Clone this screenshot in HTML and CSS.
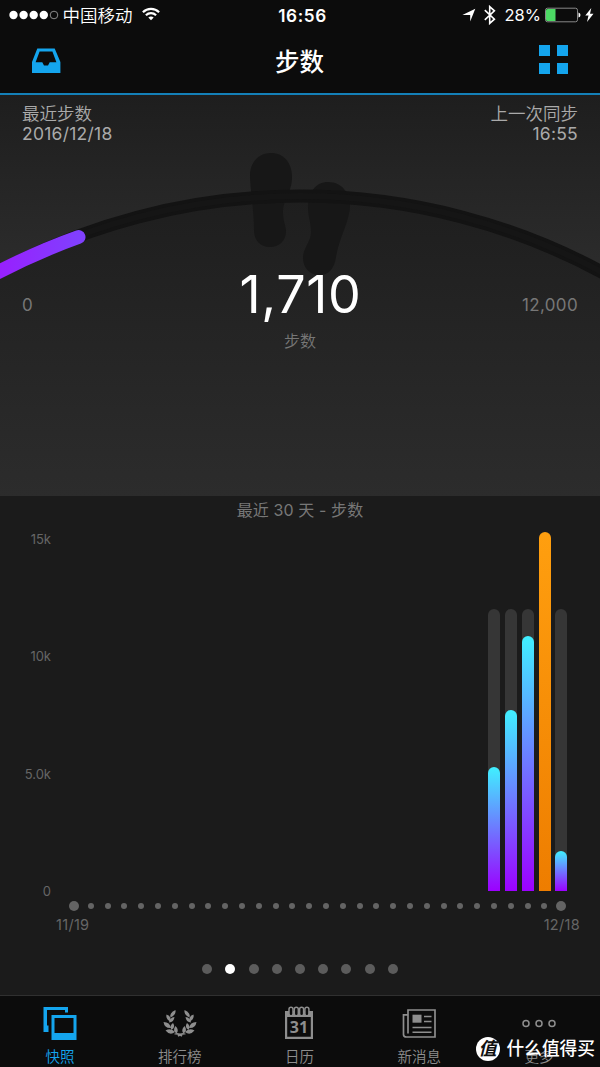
FILE: index.html
```html
<!DOCTYPE html>
<html lang="zh-CN">
  <head>
    <meta charset="UTF-8" />
    <meta name="viewport" content="width=device-width, initial-scale=1.0" />
    <title>步数</title>
    <link rel="stylesheet" href="styles.css">
  </head>
  <body>
    <div class="status">
      <div class="status-left">
        <svg width="50" height="10" viewBox="0 0 50 10">
          <g fill="#fff">
            <circle cx="4.5" cy="5" r="4.2" />
            <circle cx="14.6" cy="5" r="4.2" />
            <circle cx="24.7" cy="5" r="4.2" />
            <circle cx="34.8" cy="5" r="4.2" />
          </g>
          <circle cx="45" cy="5" r="3.8" fill="none" stroke="#aaa" stroke-width=".8" />
        </svg>
        <span class="carrier">中国移动</span>
        <svg class="wifi" width="18" height="14" viewBox="0 0 18 14">
          <g fill="none" stroke="#fff" stroke-width="2.2">
            <path d="M.9 5.2C5.4.7 12.6.7 17.1 5.2" />
            <path d="M3.9 8.3C6.8 5.5 11.2 5.5 14.1 8.3" />
          </g>
          <path d="M6.3 10.5Q9 8.5 11.7 10.5L9 13.3Z" fill="#fff" />
        </svg>
      </div>
      <div class="clock">16:56</div>
      <div class="status-right">
        <svg width="14" height="14" viewBox="0 0 14 14"><path d="M13.3.8L8.2 13.5V6.9H.4Z" fill="#fff" /></svg>
        <svg class="bluetooth" width="12" height="20" viewBox="0 0 12 20"><path d="M.8 5.2L10.4 14.2L5.7 18.4V1.6L10.4 5.8L.8 14.8" fill="none" stroke="#fff" stroke-width="1.6" /></svg>
        <span class="percent">28%</span>
        <svg width="36" height="16" viewBox="0 0 36 16">
          <rect x=".5" y="1.2" width="32" height="13.6" rx="2" fill="none" stroke="#888" />
          <path d="M2.5 2H10.5V14H2.5A1.5 1.5 0 0 1 1 12.5V3.5A1.5 1.5 0 0 1 2.5 2Z" fill="#4cd964" />
          <path d="M33.5 5.5Q35.5 6 35.5 8T33.5 10.5Z" fill="#fff" />
        </svg>
        <svg class="bolt" width="9" height="14" viewBox="0 0 9 14"><path d="M6.3 0L.3 7.6H3.5L2 14L8.5 5.7H5Z" fill="#fff" /></svg>
      </div>
    </div>

    <div class="nav">
      <svg width="30" height="26" viewBox="0 0 30 26">
        <path fill="#14a5ee" fill-rule="evenodd" d="M6.3 1.5H23.7L29.4 15V26H1V15ZM8.6 4.5L4.6 15.3H11.3L13 18.5H17L18.7 15.3H25.4L21.4 4.5Z" />
      </svg>
      <h1>步数</h1>
      <div class="grid-icon"><i></i><i></i><i></i><i></i></div>
    </div>

    <div class="gauge">
      <svg class="arc" width="600" height="401" viewBox="0 1 600 401">
        <defs>
          <linearGradient id="purple" x1="0" y1="0" x2="80" y2="0" gradientUnits="userSpaceOnUse">
            <stop offset="0" stop-color="#9820fe" />
            <stop offset="1" stop-color="#8040fe" />
          </linearGradient>
          <linearGradient id="inner" x1="0" y1="102" x2="0" y2="402" gradientUnits="userSpaceOnUse">
            <stop offset="0" stop-color="#1e1e1e" />
            <stop offset="1" stop-color="#2c2c2c" />
          </linearGradient>
        </defs>
        <path d="M0 178A637.5 637.5 0 0 1 600 178V402H0Z" fill="url(#inner)" />
        <g fill="#171717">
          <path d="M271 59C284 59 292 69 292 83C292 99 283 104 283 119C283 127 286 132 286 137C286 147 279 153 270 153C260 153 254 146 254 136C254 116 250 95 250 81C250 68 259 59 271 59Z" />
          <path d="M328 88C342 88 350 99 350 112C350 126 339 144 336 163C334 175 329 181 319 181C309 181 303 173 303 164C303 154 311 148 311 138C311 128 308 123 308 113C308 98 316 88 328 88Z" />
        </g>
        <g fill="none">
          <path d="M-10 182.5A637.5 637.5 0 0 1 610 182.5" stroke="#131313" stroke-width="13" />
          <path d="M-10 182.5A637.5 637.5 0 0 1 610 182.5" stroke="#151515" stroke-width="6" />
          <path d="M-10 182.5A637.5 637.5 0 0 1 78.5 143" stroke="url(#purple)" stroke-width="14" stroke-linecap="round" />
        </g>
      </svg>
      <div class="row top">
        <div>最近步数<br><span class="wide">2016/12/18</span></div>
        <div class="right">上一次同步<br><span class="wide">16:55</span></div>
      </div>
      <div class="row main">
        <span>0</span>
        <strong>1,710</strong>
        <span class="right">12,000</span>
      </div>
      <div class="unit">步数</div>
    </div>

    <div class="chart">
      <h2>最近 30 天 - 步数</h2>
      <div class="plot">
        <div class="axis"><span>15k</span><span>10k</span><span>5.0k</span><span>0</span></div>
        <div class="bars">
          <div class="track"><div class="bar" style="height: 124px"></div></div>
          <div class="track"><div class="bar" style="height: 181px"></div></div>
          <div class="track"><div class="bar" style="height: 255px"></div></div>
          <div class="track"><div class="bar over" style="height: 359px"></div></div>
          <div class="track"><div class="bar" style="height: 40px"></div></div>
        </div>
      </div>
      <div class="days">
        <i></i><i></i><i></i><i></i><i></i><i></i><i></i><i></i><i></i><i></i>
        <i></i><i></i><i></i><i></i><i></i><i></i><i></i><i></i><i></i><i></i>
        <i></i><i></i><i></i><i></i><i></i><i></i><i></i><i></i><i></i><i></i>
      </div>
      <div class="dates"><span>11/19</span><span>12/18</span></div>
      <div class="pager"><i></i><i class="on"></i><i></i><i></i><i></i><i></i><i></i><i></i><i></i></div>
    </div>

    <div class="tabs">
      <div class="tab active">
        <svg width="36" height="36" viewBox="0 0 36 36" fill="currentColor">
          <path d="M1.5 2H26V7.5H23V5H5V20.5H6.5V27H1.5Z" />
          <path fill-rule="evenodd" d="M9.5 10H34.5V35H9.5ZM12.5 13V28H31.5V13Z" />
        </svg>
        <span>快照</span>
      </div>
      <div class="tab">
        <svg width="36" height="36" viewBox="0 0 36 36" fill="currentColor">
          <defs>
            <g id="branch">
              <path d="M13.5 5Q14.5 10 8.5 12.5Q7 8 13.5 5Z" />
              <path d="M4.5 9.5Q9.5 11 8.500 16.500Q3.500 14.500 4.500 9.500Z" />
              <path d="M12.500 12Q12 17 7 17.500Q7.500 12.500 12.500 12Z" />
              <path d="M1.500 17Q8 17 9 23Q2.500 23.500 1.500 17Z" />
              <path d="M11 18Q14 22 9.500 25Q7 21 11 18Z" />
              <path d="M3.500 25.500Q9 22.500 13 27Q8 31 3.500 25.500Z" />
              <path d="M13.500 21Q17.500 25 14.500 28.500Q10 25.500 13.500 21Z" />
              <path d="M12.500 28.500Q17 27 20.500 30.500L19.500 31.700Q16.500 29 12.500 29.500Z" />
            </g>
          </defs>
          <use href="#branch" />
          <use href="#branch" transform="matrix(-1 0 0 1 36 0)" />
        </svg>
        <span>排行榜</span>
      </div>
      <div class="tab">
        <svg width="36" height="36" viewBox="0 0 36 36">
          <path fill="currentColor" fill-rule="evenodd" d="M4 6H32V34H4ZM6.2 12V31.8H29.8V12Z" />
          <g fill="#0c0c0c" stroke="currentColor" stroke-width="1.5">
            <rect x="8" y="2.2" width="4" height="8.500" rx="2" />
            <rect x="13.3" y="2.2" width="4" height="8.500" rx="2" />
            <rect x="18.6" y="2.2" width="4" height="8.500" rx="2" />
            <rect x="23.9" y="2.2" width="4" height="8.500" rx="2" />
          </g>
          <text class="day" x="18" y="27.7" text-anchor="middle" fill="currentColor">31</text>
        </svg>
        <span>日历</span>
      </div>
      <div class="tab">
        <svg width="36" height="36" viewBox="0 0 36 36" fill="none" stroke="currentColor" stroke-width="1.7">
          <path d="M7.5 9.8H2.5V29.5Q2.5 32 5.5 32H34V5H7V28.5" />
          <path d="M11.5 22.5H30.5M11.5 27.2H30.5M23 11.5H30.5M23 16.5H30.5" stroke-width="1.5" />
          <rect x="11.5" y="9.7" width="9" height="8" fill="currentColor" stroke="none" />
        </svg>
        <span>新消息</span>
      </div>
      <div class="tab">
        <svg width="36" height="36" viewBox="0 0 36 36" fill="none" stroke="currentColor" stroke-width="1.5">
          <circle cx="5" cy="18.5" r="3" /><circle cx="18" cy="18.5" r="3" /><circle cx="31" cy="18.5" r="3" />
        </svg>
        <span>更多</span>
      </div>
    </div>

    <div class="watermark"><b><em>值</em></b><span>什么值得买</span></div>
  </body>
</html>
```
FILE: styles.css
```css
* {
  box-sizing: border-box;
  margin: 0;
  padding: 0;
}
body {
  position: relative;
  width: 600px;
  height: 1067px;
  overflow: hidden;
  background: #1b1b1b;
  color: #fff;
  font-family: Inter, "Noto Sans CJK SC", sans-serif;
}
svg {
  display: block;
  flex: none;
}
.status {
  display: grid;
  grid-template-columns: 1fr auto 1fr;
  align-items: center;
  height: 30px;
  padding: 0 6px 0 9px;
  background: #0c0c0c;
  font-size: 17px;
}
.status-left,
.status-right {
  display: flex;
  align-items: center;
}
.status-right {
  justify-content: flex-end;
}
.carrier {
  margin: -2px 9px 0 3.5px;
  font-size: 17.5px;
  font-weight: 350;
}
.wifi {
  margin-top: -2px;
}
.clock {
  padding-left: 2px;
  font-size: 17.2px;
  font-weight: 600;
  letter-spacing: 0.6px;
}
.bluetooth {
  margin: 0 9px 0 8px;
}
.percent {
  margin-right: 4px;
  font-size: 16.5px;
}
.bolt {
  margin-left: 4px;
}
.nav {
  display: grid;
  grid-template-columns: 1fr auto 1fr;
  align-items: center;
  height: 65px;
  padding: 0 32px 3px 31px;
  border-bottom: 2px solid #1480b8;
  background: #0c0c0c;
}
.nav h1 {
  padding-top: 3px;
  font-size: 24.5px;
  font-weight: 500;
  line-height: 36px;
}
.grid-icon {
  display: grid;
  grid-template-columns: 11px 11px;
  grid-auto-rows: 11px;
  gap: 7px;
  justify-content: end;
  padding-bottom: 2px;
}
.grid-icon i {
  background: #14a5ee;
}
.gauge {
  position: relative;
  height: 401px;
  padding: 9px 22px 0;
  background: linear-gradient(#1e1e1e, #2d2d2d 47%);
}
.arc {
  position: absolute;
  top: 0;
  left: 0;
}
.row {
  position: relative;
  display: grid;
  grid-template-columns: 1fr auto 1fr;
}
.right {
  text-align: right;
}
.top {
  grid-template-columns: 1fr 1fr;
  color: #aaa;
  font-size: 17.5px;
  font-weight: 350;
  line-height: 20px;
}
.wide {
  font-weight: 400;
  letter-spacing: 0.25px;
}
.main {
  align-items: center;
  height: 70px;
  margin-top: 115px;
}
.main span {
  padding-top: 22px;
  color: #777;
  font-size: 17px;
  letter-spacing: 0.35px;
}
.main strong {
  padding-left: 1px;
  font-size: 52px;
  font-weight: 400;
  letter-spacing: 0.6px;
}
.unit {
  position: relative;
  color: #777;
  font-size: 16px;
  font-weight: 350;
  line-height: 24px;
  text-align: center;
}
.chart {
  height: 499px;
  color: #666;
}
.chart h2 {
  height: 26px;
  color: #777;
  font-size: 16px;
  font-weight: 400;
  letter-spacing: 0.1px;
  line-height: 28px;
  text-align: center;
}
.plot {
  display: flex;
  justify-content: space-between;
  height: 369px;
  padding-right: 30.3px;
}
.axis {
  display: flex;
  flex-direction: column;
  justify-content: space-between;
  width: 51px;
  height: 378px;
  padding-top: 8px;
  font-size: 13px;
  line-height: 18px;
  text-align: right;
}
.bars {
  display: grid;
  grid-template-columns: repeat(5, 16.8px);
  align-items: end;
  justify-items: center;
}
.track {
  display: flex;
  align-items: flex-end;
  width: 12px;
  height: 282px;
  border-radius: 6px 6px 0 0;
  background: #363636;
}
.bar {
  flex: none;
  width: 12px;
  border-radius: 6px 6px 0 0;
  background: linear-gradient(#40f0ff, #9c00ff);
}
.over {
  background: linear-gradient(#ff9f0f, #ee7d00);
}
.days {
  display: grid;
  grid-template-columns: repeat(30, 16.8px);
  place-items: center;
  height: 12px;
  margin: 9px 0 0 65.7px;
}
.days i {
  width: 6px;
  height: 6px;
  border-radius: 50%;
  background: #646464;
}
.days i:first-child,
.days i:last-child {
  width: 10px;
  height: 10px;
}
.dates {
  display: flex;
  justify-content: space-between;
  padding: 3px 20px 0 56px;
  font-size: 14.5px;
  letter-spacing: 0.3px;
  line-height: 20px;
}
.pager {
  display: flex;
  justify-content: center;
  gap: 13.2px;
  margin-top: 29px;
}
.pager i {
  width: 10px;
  height: 10px;
  border-radius: 50%;
  background: #5c5c5c;
}
.pager .on {
  background: #fff;
}
.tabs {
  display: grid;
  grid-template-columns: repeat(5, 119.8px);
  height: 72px;
  border-top: 1px solid #303030;
  background: #0c0c0c;
}
.tab {
  display: flex;
  flex-direction: column;
  align-items: center;
  padding-top: 9px;
  color: #8e8e8e;
  font-size: 14.5px;
  font-weight: 350;
  line-height: 22px;
}
.tab span {
  margin-top: 5px;
}
.active {
  color: #14a5ee;
}
.day {
  font: bold 16px "Open Sans", "Noto Sans", sans-serif;
}
.watermark {
  position: absolute;
  right: 5px;
  bottom: 6px;
  display: flex;
  align-items: center;
  gap: 7px;
  font-size: 17.7px;
  font-weight: 500;
  line-height: 24px;
}
.watermark b {
  width: 24px;
  height: 24px;
  border-radius: 50%;
  background: #fff;
  color: #111;
  font-size: 18px;
  line-height: 23px;
  text-align: center;
}
```
